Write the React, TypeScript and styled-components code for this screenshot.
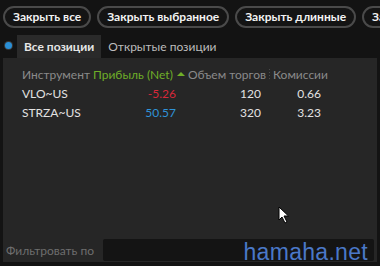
import React from "react";
import styled, { createGlobalStyle } from "styled-components";

const Global = createGlobalStyle`
  html, body { margin: 0; padding: 0; background: #131313; }
  body { width: 380px; height: 266px; overflow: hidden; font-family: Lato, "Open Sans", sans-serif; }
`;

const Root = styled.div`
  width: 380px;
  height: 266px;
  background: #131313;
  display: flex;
  flex-direction: column;
  position: relative;
  overflow: hidden;
`;

const Toolbar = styled.div`
  display: flex;
  gap: 6px;
  padding: 6px 0 0 3px;
  white-space: nowrap;
  overflow: hidden;
`;

const PillButton = styled.button`
  flex: none;
  height: 22px;
  padding: 0 8px;
  border: 2px solid #4a4a4a;
  border-radius: 11px;
  background: #141414;
  color: #f2f2f2;
  font-family: Lato, sans-serif;
  font-size: 12px;
  font-weight: 700;
  line-height: 18px;
`;

const TabRow = styled.div`
  display: flex;
  align-items: flex-end;
  height: 25px;
  margin-top: 5px;
  padding-left: 5px;
`;

const Radio = styled.span`
  width: 7px;
  height: 7px;
  border-radius: 50%;
  background: #2a8fd6;
  box-shadow: 0 0 0 1px #3a3a3a;
  align-self: center;
  margin-right: 5px;
`;

const Tab = styled.div<{ $active?: boolean }>`
  height: 23px;
  padding: 0 7px;
  display: flex;
  align-items: center;
  font-size: 12px;
  font-weight: ${(p) => (p.$active ? 700 : 400)};
  color: ${(p) => (p.$active ? "#e6e6e6" : "#bdbdbd")};
  background: ${(p) => (p.$active ? "#2a2a2a" : "transparent")};
`;

const Panel = styled.div`
  flex: 1;
  margin: 0 3px 4px 3px;
  background: #262626;
  display: flex;
  flex-direction: column;
  padding-top: 6px;
`;

const Grid = styled.div`
  display: grid;
  grid-template-columns: 71px 95px 85px 60px;
  padding-left: 17px;
  font-size: 12px;
`;

const Head = styled.div<{ $green?: boolean }>`
  height: 20px;
  display: flex;
  align-items: center;
  gap: 3px;
  color: ${(p) => (p.$green ? "#6fae28" : "#8a8a8a")};
  padding-left: 2px;
  white-space: nowrap;
`;

const Sep = styled.span`
  width: 2px;
  height: 10px;
  margin-left: auto;
  margin-right: 1px;
  background: repeating-linear-gradient(to bottom, #4a4a4a 0 1px, transparent 1px 3px);
`;

const Arrow = styled.span`
  width: 0;
  height: 0;
  border-left: 4px solid transparent;
  border-right: 4px solid transparent;
  border-bottom: 4px solid #6fae28;
  margin-left: 1px;
`;

const Cell = styled.div<{ $right?: boolean; $color?: string }>`
  height: 19px;
  display: flex;
  align-items: center;
  justify-content: ${(p) => (p.$right ? "flex-end" : "flex-start")};
  padding: ${(p) => (p.$right ? "0 10px 0 0" : "0 0 0 2px")};
  color: ${(p) => p.$color || "#e2e2e2"};
`;

const Spacer = styled.div`
  flex: 1;
`;

const FilterRow = styled.div`
  display: flex;
  align-items: center;
  height: 24px;
  padding: 0 3px 0 3px;
`;

const FilterLabel = styled.span`
  width: 97px;
  font-size: 12px;
  color: #6e6e6e;
`;

const FilterInput = styled.div`
  flex: 1;
  height: 22px;
  background: #141414;
  border-radius: 2px;
`;

const Watermark = styled.div`
  position: absolute;
  right: 12px;
  bottom: 0px;
  font-family: "Liberation Sans", Arial, sans-serif;
  font-size: 23px;
  color: #4a78c8;
  letter-spacing: 0.3px;
`;

const Cursor = styled.svg`
  position: absolute;
  left: 278px;
  top: 206px;
`;

const rows = [
  { sym: "VLO~US", pnl: "-5.26", pc: "#d8283a", vol: "120", com: "0.66" },
  { sym: "STRZA~US", pnl: "50.57", pc: "#2f93d8", vol: "320", com: "3.23" },
];

export default function App() {
  return (
    <Root>
      <Global />
      <Toolbar>
        <PillButton>Закрыть все</PillButton>
        <PillButton>Закрыть выбранное</PillButton>
        <PillButton>Закрыть длинные</PillButton>
        <PillButton>Закрыть короткие</PillButton>
      </Toolbar>
      <TabRow>
        <Radio />
        <Tab $active>Все позиции</Tab>
        <Tab>Открытые позиции</Tab>
      </TabRow>
      <Panel>
        <Grid>
          <Head>Инструмент<Sep /></Head>
          <Head $green>Прибыль (Net)<Arrow /><Sep /></Head>
          <Head>Объем торгов<Sep /></Head>
          <Head>Комиссии<Sep /></Head>
          {rows.map((r) => (
            <React.Fragment key={r.sym}>
              <Cell>{r.sym}</Cell>
              <Cell $right $color={r.pc}>{r.pnl}</Cell>
              <Cell $right>{r.vol}</Cell>
              <Cell $right>{r.com}</Cell>
            </React.Fragment>
          ))}
        </Grid>
        <Spacer />
        <FilterRow>
          <FilterLabel>Фильтровать по</FilterLabel>
          <FilterInput />
        </FilterRow>
      </Panel>
      <Cursor width="13" height="18" viewBox="0 0 13 18">
        <path d="M1 1 L1 14 L4 11 L7 17 L9 16 L6 10 L10.5 10 Z" fill="#fff" stroke="#000" strokeWidth="1" />
      </Cursor>
      <Watermark>hamaha.net</Watermark>
    </Root>
  );
}
